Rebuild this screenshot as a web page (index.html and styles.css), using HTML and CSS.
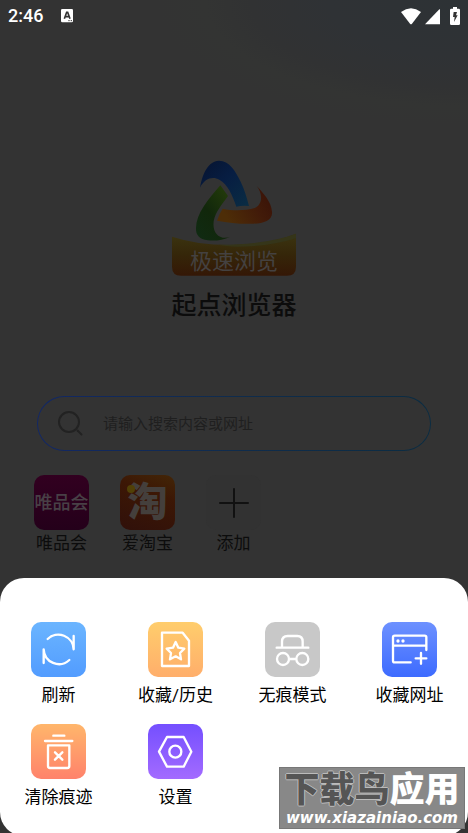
FILE: index.html
```html
<!DOCTYPE html>
<html lang="zh-CN">
<head>
<meta charset="utf-8">
<meta name="viewport" content="width=device-width, initial-scale=1">
<title>起点浏览器</title>
<link rel="stylesheet" href="styles.css">
</head>
<body>
<header class="status">
  <span class="clock">2:46</span>
  <svg class="status-app" width="12" height="14" viewBox="0 0 36 42" aria-hidden="true"><rect width="36" height="40" rx="4" fill="#fff"/><path d="M10 29 17 10h3l7 19M13 23h11" fill="none" stroke="#333" stroke-width="5"/><path d="M22 35h4m3 0h4" stroke="#333" stroke-width="3"/></svg>
  <span class="status-right">
    <svg width="20" height="17" viewBox="0 0 60 51" aria-hidden="true"><path d="M0 12Q30-10 60 12L33 47Q30 50 27 47Z" fill="#fff"/></svg>
    <svg width="16" height="17" viewBox="0 0 48 51" aria-hidden="true"><path d="M0 49 43 4Q45 3 45 6V49Z" fill="#fff"/></svg>
    <svg class="battery" width="10" height="18" viewBox="0 0 30 54" aria-hidden="true"><path d="M9 0h12v5h5q4 0 4 4v41q0 4-4 4H4q-4 0-4-4V9q0-4 4-4h5Z" fill="#fff"/><path d="M11 15h10l-3 10h5L12 45l2-15H9Z" fill="#333"/></svg>
  </span>
</header>
<main class="home">
  <div class="brand">
    <svg class="logo" width="124" height="116" viewBox="36 28 372 348" aria-hidden="true">
      <defs>
        <linearGradient id="blue" x1="0" y1="0" x2="1" y2="1"><stop stop-color="#06132f"/><stop offset=".45" stop-color="#071d42"/><stop offset="1" stop-color="#0a2d43"/></linearGradient>
        <linearGradient id="green" x1="0" y1="1" x2=".8" y2="0"><stop stop-color="#102b13"/><stop offset=".5" stop-color="#11270b"/><stop offset="1" stop-color="#233b0a"/></linearGradient>
        <linearGradient id="orange" x1="0" y1=".4" x2="1" y2="0"><stop stop-color="#4d2d07"/><stop offset=".55" stop-color="#421b09"/><stop offset="1" stop-color="#371007"/></linearGradient>
        <linearGradient id="ribbon" x1="0" y1="0" x2="0" y2="1"><stop stop-color="#3b3511"/><stop offset=".5" stop-color="#352609"/><stop offset="1" stop-color="#341706"/></linearGradient>
      </defs>
      <path d="M120 111C128 66 145 32 176 30C207 29 226 60 242 93C254 118 260 139 267 166Q246 164 229 168C217 132 203 101 178 87C158 76 134 83 120 111Z" fill="url(#blue)"/>
      <path d="M181 104 204 136C187 160 166 184 161 212C158 238 168 257 188 261Q200 262 211 258C189 269 165 271 143 269C119 266 107 254 108 232C108 190 145 145 181 104Z" fill="url(#green)"/>
      <path d="M290 106C309 126 334 153 336 183C339 209 313 218 281 219C244 221 207 216 171 210Q177 190 188 174C219 181 257 180 284 172C308 161 309 130 290 106Z" fill="url(#orange)"/>
      <path d="M36 258Q119 285 220 283Q324 283 408 249V348Q408 375 381 375H63Q36 375 36 348Z" fill="url(#ribbon)"/>
      <path d="M174 282Q320 282 408 249V263Q329 288 231 288Q196 287 174 282Z" fill="#353519"/>
      <text class="logo-text" x="222" y="355" text-anchor="middle">极速浏览</text>
    </svg>
    <h1 class="title">起点浏览器</h1>
  </div>
  <form class="search">
    <svg class="search-icon" width="26" height="26" viewBox="0 0 26 26" aria-hidden="true"><g fill="none" stroke="#222" stroke-width="2" stroke-linecap="round"><circle cx="11" cy="11" r="10"/><path d="m19.500 19.500 4 4"/></g></svg>
    <input class="search-input" type="text" aria-label="搜索" placeholder="请输入搜索内容或网址">
  </form>
  <nav class="apps">
    <a class="app" href="#"><span class="tile vip" aria-hidden="true">唯品会</span><span>唯品会</span></a>
    <a class="app" href="#"><span class="tile tao" aria-hidden="true">淘</span><span>爱淘宝</span></a>
    <a class="app" href="#"><span class="tile add"><svg width="30" height="30" viewBox="0 0 30 30" aria-hidden="true"><path d="M15 1v28M1 15h28" stroke="#111" stroke-width="2" stroke-linecap="round"/></svg></span><span>添加</span></a>
  </nav>
</main>
<section class="sheet" aria-label="菜单">
  <button class="action" type="button"><span class="tile refresh"><svg viewBox="0 0 165 165" aria-hidden="true"><path d="M50 51A46 46 0 0 1 128 82V42M115 114A46 46 0 0 1 38 82V123"/></svg></span><span>刷新</span></button>
  <button class="action" type="button"><span class="tile history"><svg viewBox="0 0 165 165" aria-hidden="true"><path d="M42 32H104L123 56V132H42Z"/><path d="M83 60 91 77 109 80 96 93 99 112 83 103 66 112 69 93 56 80 75 77Z"/></svg></span><span>收藏/历史</span></button>
  <button class="action" type="button"><span class="tile private"><svg viewBox="0 0 165 165" aria-hidden="true"><path d="M35 77H130M51 74V59Q51 42 68 42H97Q113 42 113 59V74M73 111H92"/><circle cx="54" cy="111" r="18"/><circle cx="112" cy="111" r="18"/></svg></span><span>无痕模式</span></button>
  <button class="action" type="button"><span class="tile save"><svg viewBox="0 0 165 165" aria-hidden="true"><path d="M86 121H38Q33 121 33 116V46Q33 41 38 41H128Q133 41 133 46V84M34 71H132M117 93V125M101 109H133"/><circle class="dot" cx="48" cy="57" r="5"/><circle class="dot" cx="63" cy="57" r="5"/></svg></span><span>收藏网址</span></button>
  <button class="action" type="button"><span class="tile clear"><svg viewBox="0 0 165 165" aria-hidden="true"><path d="M67 35H100M42 51H124M51 64H115V126Q115 132 109 132H57Q51 132 51 126ZM72 85 94 107M94 85 72 107"/></svg></span><span>清除痕迹</span></button>
  <button class="action" type="button"><span class="tile settings"><svg viewBox="0 0 165 165" aria-hidden="true"><path d="M57 39H107L130 83 107 128H57L33 83Z"/><circle cx="82" cy="83" r="18"/></svg></span><span>设置</span></button>
</section>
<aside class="watermark">
  <div class="mark-name"><span class="mark-dark">下载鸟</span>应用</div>
  <div class="mark-url">www.xiazainiao.com</div>
</aside>
</body>
</html>
```

FILE: styles.css
```css
* {
  box-sizing: border-box;
}

body {
  margin: 0;
  min-height: 100vh;
  display: flex;
  flex-direction: column;
  position: relative;
  overflow: hidden;
  background: radial-gradient(ellipse 310px 125px at 100% 0, #2d3235 0%, #2f3235 45%, #313233 70%, #333433 85%, #333 100%) #333;
  font-family: Roboto, "Noto Sans CJK SC", sans-serif;
  font-size: 17px;
  line-height: 24px;
  color: #000;
}

.status {
  height: 32px;
  padding: 0 8px;
  display: flex;
  align-items: center;
  color: #fff;
}

.clock {
  font-size: 18px;
  font-weight: 500;
}

.status-app {
  margin-left: 18px;
}

.status-right {
  margin-left: auto;
  display: flex;
  align-items: center;
  gap: 4px;
}

.battery {
  margin-left: 5px;
}

.home {
  padding: 128px 34px 0;
}

.brand {
  display: flex;
  flex-direction: column;
  align-items: center;
}

.logo-text {
  font-size: 66px;
  fill: #444140;
}

.title {
  margin: 12px 0 0;
  font-size: 25px;
  line-height: 36px;
  font-weight: 500;
  color: #0c0c0c;
}

.search {
  margin: 72px 3px 24px;
  height: 55px;
  padding: 0 20px;
  display: flex;
  align-items: center;
  gap: 19px;
  border: 1px solid transparent;
  border-radius: 28px;
  background: linear-gradient(#333, #333) padding-box, linear-gradient(90deg, #122765, #0f2c4d 50%, #0b2c42) border-box;
}

.search-icon {
  flex: none;
}

.search-input {
  flex: 1;
  min-width: 0;
  padding: 0;
  border: 0;
  outline: 0;
  background: none;
  font: inherit;
  font-size: 15px;
  color: #111;
}

.search-input::placeholder {
  color: #1f1f1f;
  opacity: 1;
}

.apps {
  display: flex;
  gap: 31px;
}

.app {
  display: flex;
  flex-direction: column;
  align-items: center;
  gap: 1px;
  color: #0c0c0c;
  text-decoration: none;
}

.tile {
  width: 55px;
  height: 55px;
  display: flex;
  align-items: center;
  justify-content: center;
  border-radius: 10px;
}

.vip {
  background: linear-gradient(#320020, #24001a);
  color: #484046;
  font-size: 18px;
  font-weight: 500;
}

.tao {
  position: relative;
  background: linear-gradient(20deg, #30100a, #3c1705 65%, #432607);
  color: #443f3c;
  font-size: 40px;
  font-weight: 900;
}

.tao::after {
  content: "";
  position: absolute;
  left: 7px;
  top: 10px;
  width: 8px;
  height: 8px;
  border-radius: 50%;
  background: #514006;
}

.add {
  background: #323232;
}

.sheet {
  margin: auto 0 -3px;
  min-height: 258px;
  padding: 44px 0 24px;
  display: grid;
  grid-template-columns: repeat(4, 1fr);
  align-content: start;
  row-gap: 17px;
  border-radius: 24px;
  background: #fff;
}

.action {
  padding: 0;
  border: 0;
  background: none;
  display: flex;
  flex-direction: column;
  align-items: center;
  gap: 6px;
  font: inherit;
  color: inherit;
}

.action svg {
  width: 55px;
  height: 55px;
  fill: none;
  stroke: #fff;
  stroke-width: 7;
  stroke-linecap: round;
  stroke-linejoin: round;
}

.action .dot {
  fill: #fff;
  stroke: none;
}

.refresh {
  background: linear-gradient(#6bb5ff, #529cff);
}

.history {
  background: linear-gradient(#ffcd6c, #ffae6b);
}

.private {
  background: #c8c8c8;
}

.save {
  background: linear-gradient(#6d91ff, #3d6bff);
}

.clear {
  background: linear-gradient(#ffb66b, #ff826b);
}

.settings {
  background: linear-gradient(#744fff, #a36bff);
}

.watermark {
  position: absolute;
  right: 3px;
  bottom: 4px;
  width: 186px;
  height: 62px;
  border: 1px solid #777;
  background: #888;
  color: #fff;
  text-align: center;
  white-space: nowrap;
}

.mark-name {
  font-size: 35px;
  line-height: 46px;
  height: 40px;
  font-weight: 900;
}

.mark-dark {
  color: #555;
  text-shadow: 1px 0 #bbb, -1px 0 #bbb, 0 1px #bbb, 0 -1px #bbb;
}

.mark-url {
  font-family: "DejaVu Sans", Verdana, sans-serif;
  font-size: 15px;
  line-height: 20px;
  font-weight: 700;
  font-style: italic;
}
```
